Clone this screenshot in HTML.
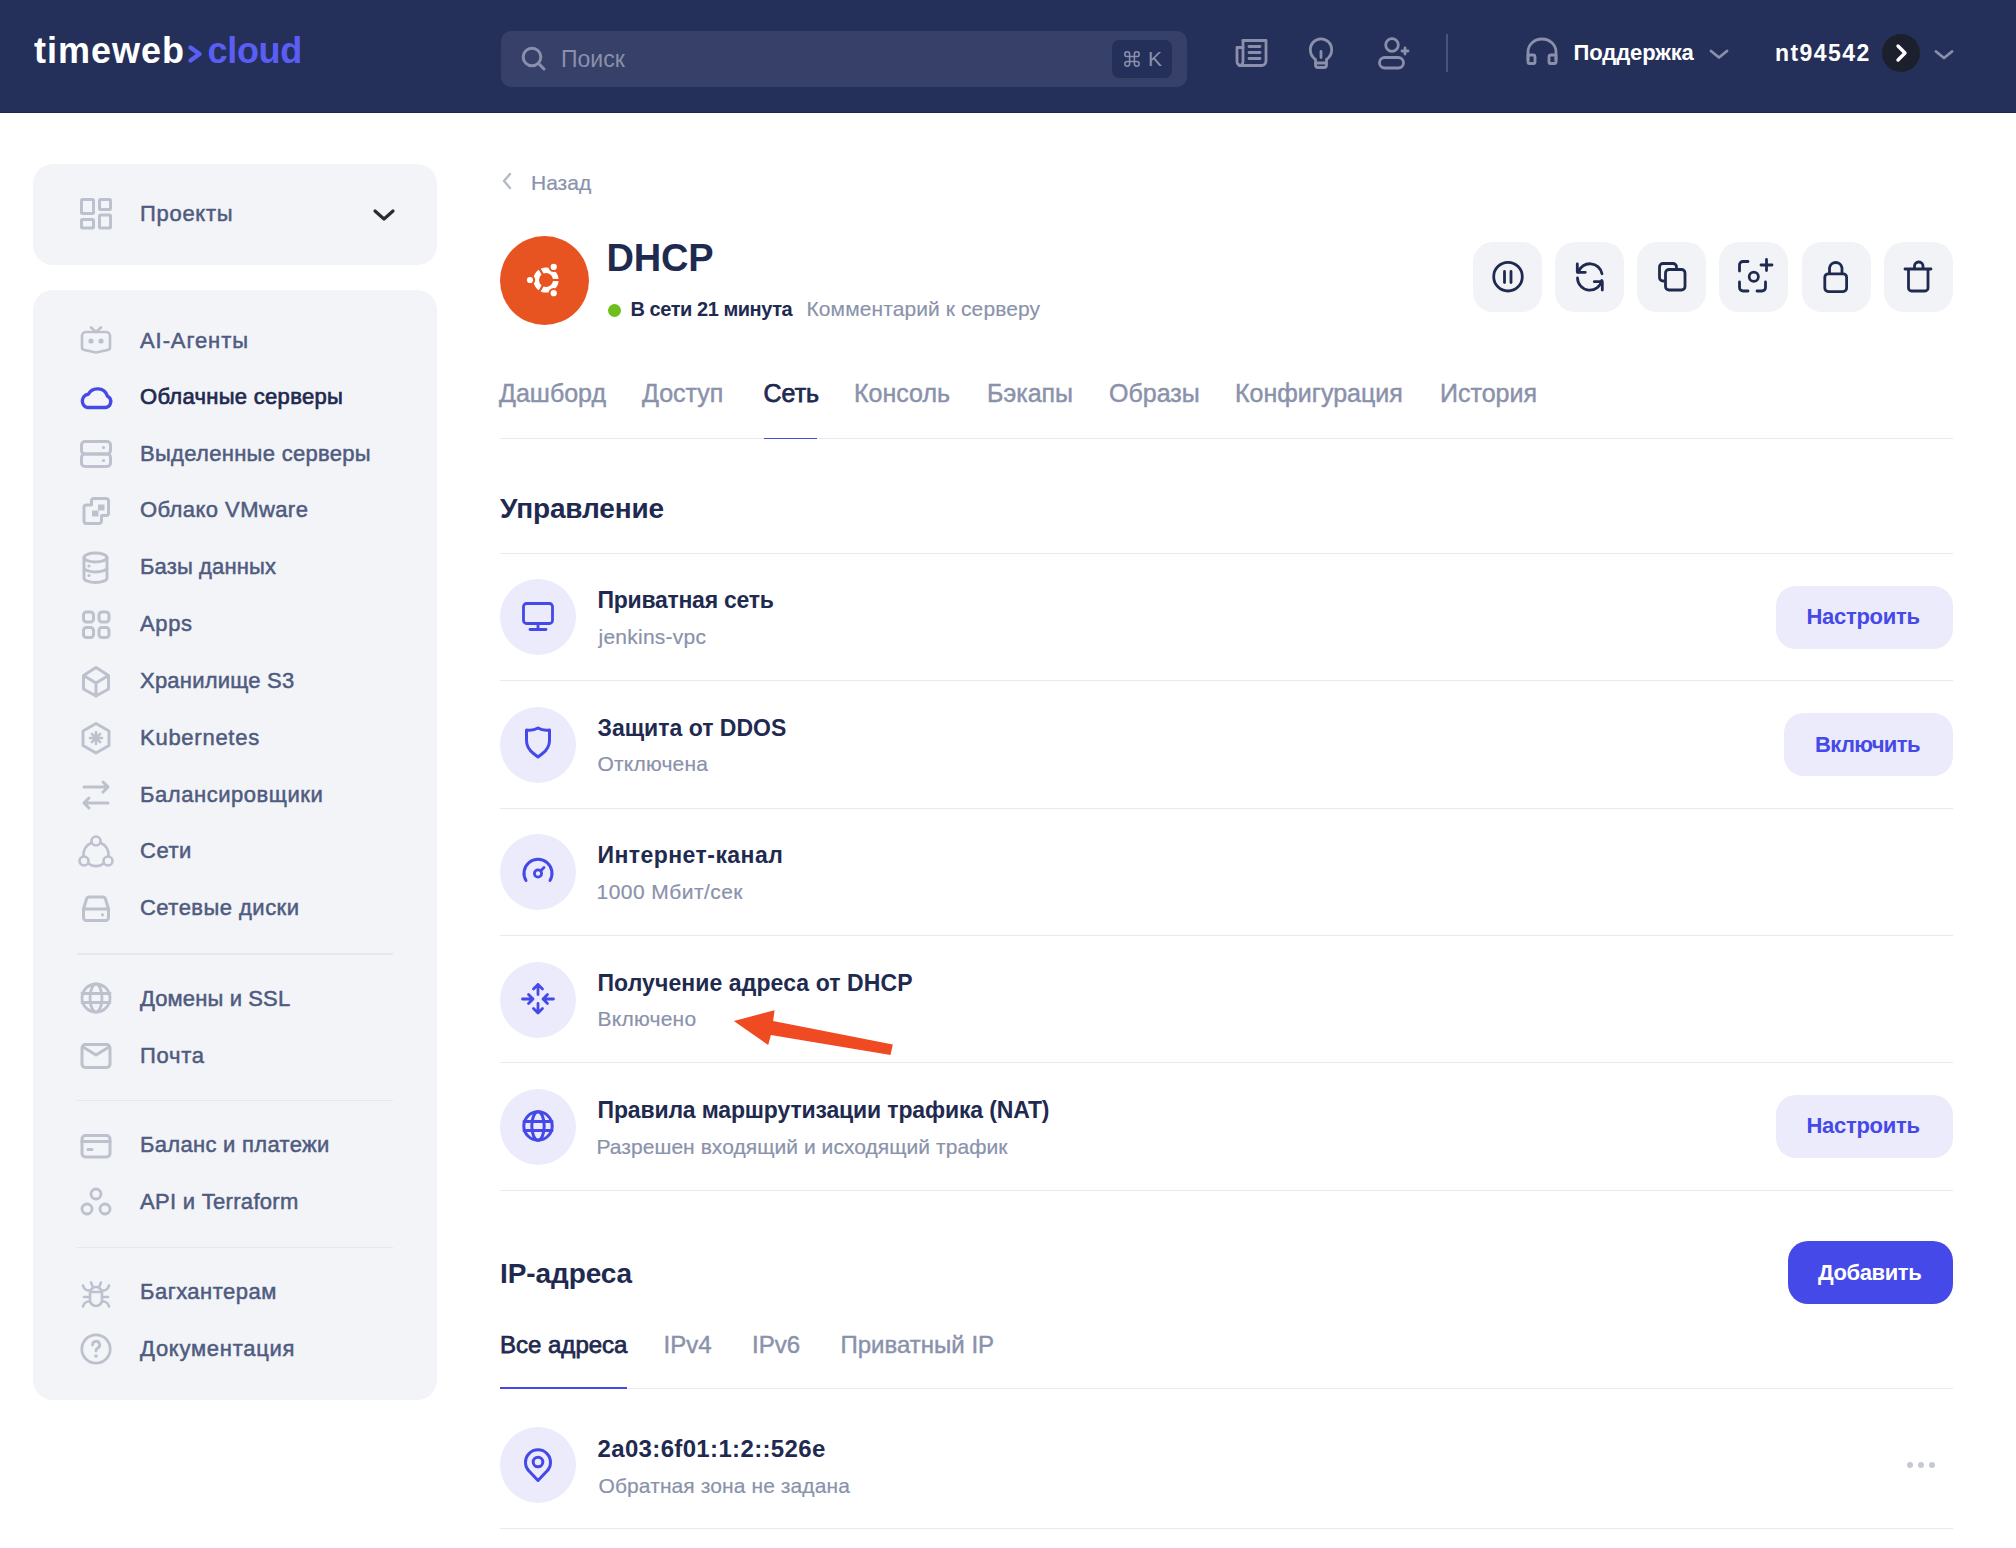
<!DOCTYPE html>
<html><head><meta charset="utf-8"><title>DHCP</title>
<style>
html,body{margin:0;padding:0;background:#fff;width:2016px;height:1548px;overflow:hidden;position:relative;font-family:"Liberation Sans",sans-serif;}
.t{position:absolute;white-space:nowrap;}
.b{position:absolute;display:block;}
</style></head><body>
<div class="b" style="left:0px;top:0px;width:2016px;height:112px;background:#25305a;border-radius:0px;"></div>
<div class="b" style="left:0px;top:112px;width:2016px;height:1px;background:#1c2550;border-radius:0px;"></div>
<div class="t" style="left:34px;top:33.2px;font-size:36px;line-height:36px;font-weight:700;color:#ffffff;letter-spacing:1px;">timeweb</div>
<svg class="b" style="left:184px;top:40px;" width="24" height="28" viewBox="0 0 24 28" fill="none" stroke-linecap="round" stroke-linejoin="round"><polyline points="6.5,7.5 15.5,14 6.5,20.5" stroke="#5a5ef5" stroke-width="4.4"/></svg>
<div class="t" style="left:207.5px;top:33.2px;font-size:36px;line-height:36px;font-weight:700;color:#5a5ef5;letter-spacing:-0.3px;">cloud</div>
<div class="b" style="left:501px;top:31px;width:686px;height:56px;background:#364069;border-radius:10px;"></div>
<svg class="b" style="left:516px;top:42px;" width="32" height="32" viewBox="0 0 32 32" fill="none" stroke-linecap="round" stroke-linejoin="round"><circle cx="16" cy="15" r="8.8" stroke="#8a90ab" stroke-width="3"/><line x1="22.5" y1="21.5" x2="28" y2="27" stroke="#8a90ab" stroke-width="3"/></svg>
<div class="t" style="left:561px;top:47.5px;font-size:23px;line-height:23px;font-weight:400;color:#8a90ab;">Поиск</div>
<div class="b" style="left:1112px;top:40px;width:60px;height:37.5px;background:#25305a;border-radius:7px;"></div>
<svg class="b" style="left:1122.2px;top:48.6px;" width="20" height="20" viewBox="0 0 20 20" fill="none" stroke-linecap="round" stroke-linejoin="round"><path d="M7.6,7.6 V5.2 A2.4,2.4 0 1 0 5.2,7.6 H14.8 A2.4,2.4 0 1 0 12.4,5.2 V14.8 A2.4,2.4 0 1 0 14.8,12.4 H5.2 A2.4,2.4 0 1 0 7.6,14.8 Z" stroke="#8a90ab" stroke-width="1.5"/></svg>
<div class="t" style="left:1148px;top:48.2px;font-size:21px;line-height:21px;font-weight:400;color:#8a90ab;">K</div>
<svg class="b" style="left:1234px;top:35.5px;" width="36" height="34" viewBox="0 0 36 34" fill="none" stroke-linecap="round" stroke-linejoin="round"><path d="M9,4.5 H32 V25 A4.5,4.5 0 0 1 27.5,29.5 H7 A4,4 0 0 1 3,25.5 V11.5 H9" stroke="#8a90ab" stroke-width="2.8"/><path d="M9,4.5 V25.5 A4,4 0 0 1 5,29.5" stroke="#8a90ab" stroke-width="2.8"/><path d="M15,10.5 H26 M15,16.5 H26 M15,22.5 H26" stroke="#8a90ab" stroke-width="2.8"/></svg>
<svg class="b" style="left:1305px;top:34px;" width="32" height="38" viewBox="0 0 32 38" fill="none" stroke-linecap="round" stroke-linejoin="round"><path d="M10.5,25.5 C7,23 5.3,19.5 5.3,15.5 A10.7,10.7 0 0 1 26.7,15.5 C26.7,19.5 25,23 21.5,25.5 V31 A2.5,2.5 0 0 1 19,33.5 H13 A2.5,2.5 0 0 1 10.5,31 Z" stroke="#8a90ab" stroke-width="2.8"/><path d="M11,29 H21 M16,17.5 V23.5" stroke="#8a90ab" stroke-width="2.8"/></svg>
<svg class="b" style="left:1376px;top:34px;" width="38" height="38" viewBox="0 0 38 38" fill="none" stroke-linecap="round" stroke-linejoin="round"><circle cx="16" cy="11" r="6.3" stroke="#8a90ab" stroke-width="2.8"/><rect x="3.5" y="23.5" width="24" height="10.5" rx="5.2" stroke="#8a90ab" stroke-width="2.8"/><path d="M29,14 V20 M26,17 H32" stroke="#8a90ab" stroke-width="2.8"/></svg>
<div class="b" style="left:1446px;top:34px;width:2px;height:38px;background:#4a5378;border-radius:0px;"></div>
<svg class="b" style="left:1524px;top:35px;" width="36" height="34" viewBox="0 0 36 34" fill="none" stroke-linecap="round" stroke-linejoin="round"><path d="M4,25 V17 A14,13 0 0 1 32,17 V25" stroke="#8a90ab" stroke-width="2.8"/><path d="M4,20 H9 A2,2 0 0 1 11,22 V27.5 A1,1 0 0 1 10,28.5 H5 A1,1 0 0 1 4,27.5 Z M32,20 H27 A2,2 0 0 0 25,22 V27.5 A1,1 0 0 0 26,28.5 H31 A1,1 0 0 0 32,27.5 Z" stroke="#8a90ab" stroke-width="2.8"/></svg>
<div class="t" style="left:1573.5px;top:42.2px;font-size:22px;line-height:22px;font-weight:700;color:#ffffff;letter-spacing:-0.1px;">Поддержка</div>
<svg class="b" style="left:1706px;top:46px;" width="26" height="16" viewBox="0 0 26 16" fill="none" stroke-linecap="round" stroke-linejoin="round"><polyline points="5,5 13,11.5 21,5" stroke="#8a90ab" stroke-width="2.8"/></svg>
<div class="t" style="left:1775px;top:41.7px;font-size:23px;line-height:23px;font-weight:700;color:#ffffff;letter-spacing:1.45px;">nt94542</div>
<div class="b" style="left:1882px;top:34px;width:38px;height:38px;border-radius:50%;background:#1b202c"></div>
<svg class="b" style="left:1892px;top:40px;" width="20" height="26" viewBox="0 0 20 26" fill="none" stroke-linecap="round" stroke-linejoin="round"><polyline points="6,6 13,13 6,20" stroke="#fff" stroke-width="3.4"/></svg>
<svg class="b" style="left:1931px;top:46px;" width="26" height="16" viewBox="0 0 26 16" fill="none" stroke-linecap="round" stroke-linejoin="round"><polyline points="5,5.5 13,12 21,5.5" stroke="#8a90ab" stroke-width="2.8"/></svg>
<div class="b" style="left:33px;top:164px;width:404px;height:101px;background:#f3f4f7;border-radius:20px;"></div>
<svg class="b" style="left:78px;top:196px;" width="36" height="36" viewBox="0 0 36 36" fill="none" stroke-linecap="round" stroke-linejoin="round"><rect x="3.5" y="3.5" width="12" height="14" rx="1" stroke="#bcc1cd" stroke-width="3"/><rect x="21.5" y="3.5" width="11" height="10" rx="1" stroke="#bcc1cd" stroke-width="3"/><rect x="3.5" y="23.5" width="12" height="8.5" rx="1" stroke="#bcc1cd" stroke-width="3"/><rect x="21.5" y="19" width="11" height="13" rx="1" stroke="#bcc1cd" stroke-width="3"/></svg>
<div class="t" style="left:140px;top:203.3px;font-size:22px;line-height:22px;font-weight:400;color:#4f5b80;letter-spacing:0.7px;-webkit-text-stroke:0.5px #4f5b80;">Проекты</div>
<svg class="b" style="left:371px;top:206px;" width="26" height="18" viewBox="0 0 26 18" fill="none" stroke-linecap="round" stroke-linejoin="round"><polyline points="4,5 13,13 22,5" stroke="#2a2b33" stroke-width="3.2"/></svg>
<div class="b" style="left:33px;top:290px;width:404px;height:1110px;background:#f3f4f7;border-radius:20px;"></div>
<div class="t" style="left:140px;top:329.6px;font-size:22px;line-height:22px;font-weight:400;color:#4f5b80;letter-spacing:0.92px;-webkit-text-stroke:0.5px #4f5b80;">AI-Агенты</div>
<div class="t" style="left:140px;top:385.8px;font-size:22px;line-height:22px;font-weight:400;color:#1f2a50;letter-spacing:0.30px;-webkit-text-stroke:0.7px #1f2a50;">Облачные серверы</div>
<div class="t" style="left:140px;top:443.0px;font-size:22px;line-height:22px;font-weight:400;color:#4f5b80;letter-spacing:0.30px;-webkit-text-stroke:0.5px #4f5b80;">Выделенные серверы</div>
<div class="t" style="left:140px;top:498.9px;font-size:22px;line-height:22px;font-weight:400;color:#4f5b80;letter-spacing:0.43px;-webkit-text-stroke:0.5px #4f5b80;">Облако VMware</div>
<div class="t" style="left:140px;top:556.3px;font-size:22px;line-height:22px;font-weight:400;color:#4f5b80;letter-spacing:0.13px;-webkit-text-stroke:0.5px #4f5b80;">Базы данных</div>
<div class="t" style="left:140px;top:612.9px;font-size:22px;line-height:22px;font-weight:400;color:#4f5b80;letter-spacing:0.63px;-webkit-text-stroke:0.5px #4f5b80;">Apps</div>
<div class="t" style="left:140px;top:669.9px;font-size:22px;line-height:22px;font-weight:400;color:#4f5b80;letter-spacing:0.21px;-webkit-text-stroke:0.5px #4f5b80;">Хранилище S3</div>
<div class="t" style="left:140px;top:726.7px;font-size:22px;line-height:22px;font-weight:400;color:#4f5b80;letter-spacing:0.74px;-webkit-text-stroke:0.5px #4f5b80;">Kubernetes</div>
<div class="t" style="left:140px;top:783.7px;font-size:22px;line-height:22px;font-weight:400;color:#4f5b80;letter-spacing:0.55px;-webkit-text-stroke:0.5px #4f5b80;">Балансировщики</div>
<div class="t" style="left:140px;top:840.3px;font-size:22px;line-height:22px;font-weight:400;color:#4f5b80;letter-spacing:0.53px;-webkit-text-stroke:0.5px #4f5b80;">Сети</div>
<div class="t" style="left:140px;top:896.7px;font-size:22px;line-height:22px;font-weight:400;color:#4f5b80;letter-spacing:0.47px;-webkit-text-stroke:0.5px #4f5b80;">Сетевые диски</div>
<div class="t" style="left:140px;top:988.3px;font-size:22px;line-height:22px;font-weight:400;color:#4f5b80;letter-spacing:0.12px;-webkit-text-stroke:0.5px #4f5b80;">Домены и SSL</div>
<div class="t" style="left:140px;top:1044.8px;font-size:22px;line-height:22px;font-weight:400;color:#4f5b80;letter-spacing:0.70px;-webkit-text-stroke:0.5px #4f5b80;">Почта</div>
<div class="t" style="left:140px;top:1134.3px;font-size:22px;line-height:22px;font-weight:400;color:#4f5b80;letter-spacing:0.30px;-webkit-text-stroke:0.5px #4f5b80;">Баланс и платежи</div>
<div class="t" style="left:140px;top:1191.3px;font-size:22px;line-height:22px;font-weight:400;color:#4f5b80;letter-spacing:0.30px;-webkit-text-stroke:0.5px #4f5b80;">API и Terraform</div>
<div class="t" style="left:140px;top:1281.3px;font-size:22px;line-height:22px;font-weight:400;color:#4f5b80;letter-spacing:0.48px;-webkit-text-stroke:0.5px #4f5b80;">Багхантерам</div>
<div class="t" style="left:140px;top:1338.3px;font-size:22px;line-height:22px;font-weight:400;color:#4f5b80;letter-spacing:0.74px;-webkit-text-stroke:0.5px #4f5b80;">Документация</div>
<div class="b" style="left:77px;top:953px;width:316px;height:2px;background:#e4e7ec;border-radius:0px;"></div>
<div class="b" style="left:77px;top:1100px;width:316px;height:1px;background:#e4e7ec;border-radius:0px;"></div>
<div class="b" style="left:77px;top:1247px;width:316px;height:1px;background:#e4e7ec;border-radius:0px;"></div>
<svg class="b" style="left:78px;top:324px;" width="36" height="36" viewBox="0 0 36 36" fill="none" stroke-linecap="round" stroke-linejoin="round"><path d="M4,12 A4,4 0 0 1 8,8 H28 A4,4 0 0 1 32,12 V23 A3,3 0 0 1 29.5,26 L18,28.5 L6.5,26 A3,3 0 0 1 4,23 Z" stroke="#bcc1cd" stroke-width="2.6"/><path d="M13,3.5 L18,8 L23,3.5" stroke="#bcc1cd" stroke-width="2.6"/><circle cx="13" cy="17" r="2.6" fill="#bcc1cd"/><circle cx="23" cy="17" r="2.6" fill="#bcc1cd"/></svg>
<svg class="b" style="left:78px;top:379px;" width="36" height="36" viewBox="0 0 36 36" fill="none" stroke-linecap="round" stroke-linejoin="round"><path d="M9,28.5 H27 A6,6 0 0 0 29.5,17.2 A10.5,10.5 0 0 0 10.3,15.3 A6.8,6.8 0 0 0 9,28.5 Z" stroke="#4549e8" stroke-width="3.4"/></svg>
<svg class="b" style="left:78px;top:436px;" width="36" height="36" viewBox="0 0 36 36" fill="none" stroke-linecap="round" stroke-linejoin="round"><rect x="3.5" y="5.5" width="29" height="12.5" rx="3.5" stroke="#bcc1cd" stroke-width="3"/><rect x="3.5" y="18" width="29" height="12.5" rx="3.5" stroke="#bcc1cd" stroke-width="3"/><circle cx="25.5" cy="11.5" r="1.6" fill="#bcc1cd"/><circle cx="25.5" cy="24.5" r="1.6" fill="#bcc1cd"/></svg>
<svg class="b" style="left:78px;top:493px;" width="36" height="36" viewBox="0 0 36 36" fill="none" stroke-linecap="round" stroke-linejoin="round"><path d="M6,14.5 A2.5,2.5 0 0 1 8.5,12 H13.5 V8 A2.5,2.5 0 0 1 16,5.5 H28 A2.5,2.5 0 0 1 30.5,8 V20 A2.5,2.5 0 0 1 28,22.5 H23.5 V28 A2.5,2.5 0 0 1 21,30.5 H8.5 A2.5,2.5 0 0 1 6,28 Z" stroke="#bcc1cd" stroke-width="3"/><rect x="20" y="11.5" width="6.5" height="6" fill="#bcc1cd"/><rect x="14" y="17.5" width="6.5" height="6" fill="#bcc1cd"/></svg>
<svg class="b" style="left:78px;top:550px;" width="36" height="36" viewBox="0 0 36 36" fill="none" stroke-linecap="round" stroke-linejoin="round"><ellipse cx="17.5" cy="7.5" rx="11.5" ry="4.5" stroke="#bcc1cd" stroke-width="3"/><path d="M6,7.5 V28 C6,30.5 11,32.5 17.5,32.5 C24,32.5 29,30.5 29,28 V7.5 M6,17.5 C6,20 11,22 17.5,22 C24,22 29,20 29,17.5" stroke="#bcc1cd" stroke-width="3"/><circle cx="11" cy="16" r="1.6" fill="#bcc1cd"/><circle cx="11" cy="25.5" r="1.6" fill="#bcc1cd"/></svg>
<svg class="b" style="left:78px;top:607px;" width="36" height="36" viewBox="0 0 36 36" fill="none" stroke-linecap="round" stroke-linejoin="round"><rect x="5.5" y="5" width="10" height="10" rx="3" stroke="#bcc1cd" stroke-width="3"/><rect x="21" y="5" width="10" height="10" rx="3" stroke="#bcc1cd" stroke-width="3"/><rect x="5.5" y="20.5" width="10" height="10" rx="3" stroke="#bcc1cd" stroke-width="3"/><rect x="21" y="20.5" width="10" height="10" rx="3" stroke="#bcc1cd" stroke-width="3"/></svg>
<svg class="b" style="left:78px;top:663px;" width="36" height="36" viewBox="0 0 36 36" fill="none" stroke-linecap="round" stroke-linejoin="round"><path d="M18,4.5 L30.5,12.5 V26 L18,33 L5.5,26 V12.5 Z M5.5,12.5 L18,20 L30.5,12.5 M18,20 V33" stroke="#bcc1cd" stroke-width="3"/></svg>
<svg class="b" style="left:78px;top:720px;" width="36" height="36" viewBox="0 0 36 36" fill="none" stroke-linecap="round" stroke-linejoin="round"><path d="M18,3.5 L31,11 V25.5 L18,33 L5,25.5 V11 Z" stroke="#bcc1cd" stroke-width="3"/><path d="M18,12 V24 M12,18 H24 M13.8,13.8 L22.2,22.2 M22.2,13.8 L13.8,22.2" stroke="#bcc1cd" stroke-width="2.6"/><circle cx="18" cy="18" r="3.5" fill="#bcc1cd"/></svg>
<svg class="b" style="left:78px;top:777px;" width="36" height="36" viewBox="0 0 36 36" fill="none" stroke-linecap="round" stroke-linejoin="round"><path d="M6,10 H30 M25,5 L30,10 L25,15 M30,26 H6 M11,21 L6,26 L11,31" stroke="#bcc1cd" stroke-width="3"/></svg>
<svg class="b" style="left:78px;top:834px;" width="36" height="36" viewBox="0 0 36 36" fill="none" stroke-linecap="round" stroke-linejoin="round"><circle cx="18" cy="7" r="4.5" stroke="#bcc1cd" stroke-width="2.6"/><circle cx="6" cy="27" r="4.5" stroke="#bcc1cd" stroke-width="2.6"/><circle cx="30" cy="27" r="4.5" stroke="#bcc1cd" stroke-width="2.6"/><path d="M13.7,8.8 A12.5,12.5 0 0 0 5.5,22.5 M22.3,8.8 A12.5,12.5 0 0 1 30.5,22.5 M10.3,29.5 A12.5,12.5 0 0 0 25.7,29.5" stroke="#bcc1cd" stroke-width="2.6"/></svg>
<svg class="b" style="left:78px;top:891px;" width="36" height="36" viewBox="0 0 36 36" fill="none" stroke-linecap="round" stroke-linejoin="round"><path d="M5.5,18 L8.5,8 A3,3 0 0 1 11.3,6 H24.7 A3,3 0 0 1 27.5,8 L30.5,18 V26.5 A3,3 0 0 1 27.5,29.5 H8.5 A3,3 0 0 1 5.5,26.5 Z M5.5,18 H30.5" stroke="#bcc1cd" stroke-width="3"/><circle cx="24.5" cy="23.8" r="1.6" fill="#bcc1cd"/></svg>
<svg class="b" style="left:78px;top:981px;" width="36" height="36" viewBox="0 0 36 36" fill="none" stroke-linecap="round" stroke-linejoin="round"><circle cx="18" cy="17" r="14" stroke="#bcc1cd" stroke-width="2.8"/><ellipse cx="18" cy="17" rx="6" ry="14" stroke="#bcc1cd" stroke-width="2.8"/><path d="M4,12.5 H32 M4,21.5 H32" stroke="#bcc1cd" stroke-width="2.8"/></svg>
<svg class="b" style="left:78px;top:1037px;" width="36" height="36" viewBox="0 0 36 36" fill="none" stroke-linecap="round" stroke-linejoin="round"><rect x="4" y="7.5" width="28" height="23" rx="3.5" stroke="#bcc1cd" stroke-width="3"/><path d="M5,10 L18,18 L31,10" stroke="#bcc1cd" stroke-width="3"/></svg>
<svg class="b" style="left:78px;top:1128px;" width="36" height="36" viewBox="0 0 36 36" fill="none" stroke-linecap="round" stroke-linejoin="round"><rect x="4" y="7.5" width="28" height="21.5" rx="3.5" stroke="#bcc1cd" stroke-width="3"/><path d="M4,13.5 H32 M10,21.5 H14" stroke="#bcc1cd" stroke-width="3"/></svg>
<svg class="b" style="left:78px;top:1185px;" width="36" height="36" viewBox="0 0 36 36" fill="none" stroke-linecap="round" stroke-linejoin="round"><circle cx="18" cy="9" r="5" stroke="#bcc1cd" stroke-width="2.8"/><circle cx="9" cy="24" r="5" stroke="#bcc1cd" stroke-width="2.8"/><circle cx="27" cy="24" r="5" stroke="#bcc1cd" stroke-width="2.8"/></svg>
<svg class="b" style="left:78px;top:1276px;" width="36" height="36" viewBox="0 0 36 36" fill="none" stroke-linecap="round" stroke-linejoin="round"><path d="M12,17 A6,6 0 0 1 24,17 V24 A6,6 0 0 1 12,24 Z M12,16 H24" stroke="#bcc1cd" stroke-width="2.6"/><path d="M13,6.5 L14.5,10 M23,6.5 L21.5,10 M5,9.5 A6,6 0 0 0 11,14.5 M31,9.5 A6,6 0 0 1 25,14.5 M6,21 H12 M24,21 H30 M5,30.5 A6,6 0 0 1 11,25.5 M31,30.5 A6,6 0 0 0 25,25.5" stroke="#bcc1cd" stroke-width="2.6"/></svg>
<svg class="b" style="left:78px;top:1331px;" width="36" height="36" viewBox="0 0 36 36" fill="none" stroke-linecap="round" stroke-linejoin="round"><circle cx="18" cy="18" r="14.2" stroke="#bcc1cd" stroke-width="2.8"/><path d="M14.5,14 A3.6,3.6 0 1 1 19.5,17.2 C18.5,17.8 18,18.5 18,19.5 V20" stroke="#bcc1cd" stroke-width="2.8"/><circle cx="18" cy="25" r="1.8" fill="#bcc1cd"/></svg>
<svg class="b" style="left:498px;top:170px;" width="18" height="22" viewBox="0 0 18 22" fill="none" stroke-linecap="round" stroke-linejoin="round"><polyline points="12,4 6,11 12,18" stroke="#b4b9c7" stroke-width="2.4"/></svg>
<div class="t" style="left:531px;top:171.6px;font-size:21px;line-height:21px;font-weight:400;color:#8a92ab;-webkit-text-stroke:0.2px #8a92ab;">Назад</div>
<div class="b" style="left:500px;top:236px;width:89px;height:89px;border-radius:50%;background:#e85421"></div>
<svg class="b" style="left:500px;top:236px" width="89" height="89" viewBox="0 0 89 89"><g transform="translate(46,44)"><circle r="9.8" fill="none" stroke="#fff" stroke-width="5.6"/><g stroke="#e85421" stroke-width="2.2"><line x1="0" y1="0" x2="14" y2="0" transform="rotate(0)"/><line x1="0" y1="0" x2="14" y2="0" transform="rotate(120)"/><line x1="0" y1="0" x2="14" y2="0" transform="rotate(240)"/></g><g fill="#e85421"><circle cx="-16" cy="0" r="5.2"/><circle cx="7.7" cy="-13.1" r="5.2"/><circle cx="7.7" cy="13.2" r="5.2"/></g><g fill="#fff"><circle cx="-16" cy="0" r="3.1"/><circle cx="7.7" cy="-13.1" r="3.1"/><circle cx="7.7" cy="13.2" r="3.1"/></g></g></svg>
<div class="t" style="left:606.5px;top:239.2px;font-size:38px;line-height:38px;font-weight:700;color:#1f2a50;letter-spacing:-0.2px;">DHCP</div>
<div class="b" style="left:607.5px;top:303.5px;width:13px;height:13px;border-radius:50%;background:#6cbf1c"></div>
<div class="t" style="left:630.5px;top:299.0px;font-size:20px;line-height:20px;font-weight:700;color:#1f2a50;letter-spacing:-0.45px;">В сети 21 минута</div>
<div class="t" style="left:806.5px;top:298.1px;font-size:21px;line-height:21px;font-weight:400;color:#8a92ab;letter-spacing:0.1px;-webkit-text-stroke:0.15px #8a92ab;">Комментарий к серверу</div>
<div class="b" style="left:1473px;top:242px;width:69px;height:70px;background:#f2f3f6;border-radius:20px;"></div>
<div class="b" style="left:1555px;top:242px;width:69px;height:70px;background:#f2f3f6;border-radius:20px;"></div>
<div class="b" style="left:1637px;top:242px;width:69px;height:70px;background:#f2f3f6;border-radius:20px;"></div>
<div class="b" style="left:1719px;top:242px;width:69px;height:70px;background:#f2f3f6;border-radius:20px;"></div>
<div class="b" style="left:1801.5px;top:242px;width:69px;height:70px;background:#f2f3f6;border-radius:20px;"></div>
<div class="b" style="left:1884px;top:242px;width:69px;height:70px;background:#f2f3f6;border-radius:20px;"></div>
<svg class="b" style="left:1490px;top:259px;" width="36" height="36" viewBox="0 0 36 36" fill="none" stroke-linecap="round" stroke-linejoin="round"><circle cx="18" cy="17.7" r="14.3" stroke="#1f2a50" stroke-width="2.8"/><path d="M14.5,12.5 V23.5 M21,12.5 V23.5" stroke="#1f2a50" stroke-width="2.8"/></svg>
<svg class="b" style="left:1572px;top:259px;" width="36" height="36" viewBox="0 0 36 36" fill="none" stroke-linecap="round" stroke-linejoin="round"><path d="M5.5,19 A12.3,12.3 0 0 0 29.8,21.5 M30,14.8 A12.3,12.3 0 0 0 6.3,13" stroke="#1f2a50" stroke-width="2.8"/><path d="M5.3,5 V13.3 H13.3 M30.3,31 V22.7 H22.3" stroke="#1f2a50" stroke-width="2.8"/></svg>
<svg class="b" style="left:1654px;top:259px;" width="36" height="36" viewBox="0 0 36 36" fill="none" stroke-linecap="round" stroke-linejoin="round"><path d="M22.5,9 V8 A3.5,3.5 0 0 0 19,4.5 H9 A3.5,3.5 0 0 0 5.5,8 V18.5 A3.5,3.5 0 0 0 9,22 H10" stroke="#1f2a50" stroke-width="2.8"/><rect x="11.5" y="10.5" width="19.5" height="20.5" rx="3.5" stroke="#1f2a50" stroke-width="2.8"/></svg>
<svg class="b" style="left:1736px;top:256px;" width="40" height="40" viewBox="0 0 40 40" fill="none" stroke-linecap="round" stroke-linejoin="round"><path d="M3.5,15 V9 A3.5,3.5 0 0 1 7,5.5 H12 M3.5,26 V31.5 A3.5,3.5 0 0 0 7,35 H12 M29.5,26 V31.5 A3.5,3.5 0 0 1 26,35 H21 M30.5,3.5 V14.5 M25,9 H36" stroke="#1f2a50" stroke-width="2.8"/><circle cx="17.8" cy="20.7" r="4.6" stroke="#1f2a50" stroke-width="2.8"/></svg>
<svg class="b" style="left:1818px;top:256px;" width="36" height="40" viewBox="0 0 36 40" fill="none" stroke-linecap="round" stroke-linejoin="round"><rect x="6.8" y="17.8" width="21.8" height="17.8" rx="3.5" stroke="#1f2a50" stroke-width="2.8"/><path d="M11.5,17.5 V12 A6.3,6.3 0 0 1 24,12 V17.5" stroke="#1f2a50" stroke-width="2.8"/></svg>
<svg class="b" style="left:1900px;top:256px;" width="36" height="40" viewBox="0 0 36 40" fill="none" stroke-linecap="round" stroke-linejoin="round"><path d="M5,13 H31 M14.5,13 V10 A4,4 0 0 1 18.5,6 H19 A4,4 0 0 1 23,10 V13 M8.5,13 V32 A3,3 0 0 0 11.5,35 H25 A3,3 0 0 0 28,32 V13" stroke="#1f2a50" stroke-width="2.8"/></svg>
<div class="t" style="left:499px;top:381.2px;font-size:25px;line-height:25px;font-weight:400;color:#8a92ab;-webkit-text-stroke:0.45px #8a92ab;">Дашборд</div>
<div class="t" style="left:642px;top:381.2px;font-size:25px;line-height:25px;font-weight:400;color:#8a92ab;-webkit-text-stroke:0.45px #8a92ab;">Доступ</div>
<div class="t" style="left:763.5px;top:381.2px;font-size:25px;line-height:25px;font-weight:400;color:#1f2a50;-webkit-text-stroke:0.75px #1f2a50;">Сеть</div>
<div class="t" style="left:854px;top:381.2px;font-size:25px;line-height:25px;font-weight:400;color:#8a92ab;-webkit-text-stroke:0.45px #8a92ab;">Консоль</div>
<div class="t" style="left:987px;top:381.2px;font-size:25px;line-height:25px;font-weight:400;color:#8a92ab;-webkit-text-stroke:0.45px #8a92ab;">Бэкапы</div>
<div class="t" style="left:1109px;top:381.2px;font-size:25px;line-height:25px;font-weight:400;color:#8a92ab;-webkit-text-stroke:0.45px #8a92ab;">Образы</div>
<div class="t" style="left:1235px;top:381.2px;font-size:25px;line-height:25px;font-weight:400;color:#8a92ab;-webkit-text-stroke:0.45px #8a92ab;">Конфигурация</div>
<div class="t" style="left:1440px;top:381.2px;font-size:25px;line-height:25px;font-weight:400;color:#8a92ab;-webkit-text-stroke:0.45px #8a92ab;">История</div>
<div class="b" style="left:500px;top:438px;width:1453px;height:1px;background:#e6e9ee;border-radius:0px;"></div>
<div class="b" style="left:764px;top:437.6px;width:53px;height:1.8px;background:#4549e8;border-radius:0px;"></div>
<div class="t" style="left:500px;top:495.4px;font-size:28px;line-height:28px;font-weight:700;color:#1f2a50;letter-spacing:-0.15px;">Управление</div>
<div class="b" style="left:500px;top:553px;width:1453px;height:1px;background:#e6e9ee;border-radius:0px;"></div>
<div class="b" style="left:500px;top:680px;width:1453px;height:1px;background:#e6e9ee;border-radius:0px;"></div>
<div class="b" style="left:500px;top:808px;width:1453px;height:1px;background:#e6e9ee;border-radius:0px;"></div>
<div class="b" style="left:500px;top:935px;width:1453px;height:1px;background:#e6e9ee;border-radius:0px;"></div>
<div class="b" style="left:500px;top:1062px;width:1453px;height:1px;background:#e6e9ee;border-radius:0px;"></div>
<div class="b" style="left:500px;top:1190px;width:1453px;height:1px;background:#e6e9ee;border-radius:0px;"></div>
<div class="b" style="left:500px;top:579.0px;width:76px;height:76px;border-radius:50%;background:#ebebfb"></div>
<div class="t" style="left:597.5px;top:589.4px;font-size:23px;line-height:23px;font-weight:700;color:#1f2a50;letter-spacing:-0.27px;">Приватная сеть</div>
<div class="t" style="left:598.5px;top:625.6px;font-size:21px;line-height:21px;font-weight:400;color:#8a92ab;letter-spacing:0.25px;-webkit-text-stroke:0.2px #8a92ab;">jenkins-vpc</div>
<div class="b" style="left:500px;top:706.5px;width:76px;height:76px;border-radius:50%;background:#ebebfb"></div>
<div class="t" style="left:597.5px;top:716.9px;font-size:23px;line-height:23px;font-weight:700;color:#1f2a50;letter-spacing:0px;">Защита от DDOS</div>
<div class="t" style="left:597.5px;top:753.1px;font-size:21px;line-height:21px;font-weight:400;color:#8a92ab;letter-spacing:0.2px;-webkit-text-stroke:0.2px #8a92ab;">Отключена</div>
<div class="b" style="left:500px;top:834.0px;width:76px;height:76px;border-radius:50%;background:#ebebfb"></div>
<div class="t" style="left:597.5px;top:844.4px;font-size:23px;line-height:23px;font-weight:700;color:#1f2a50;letter-spacing:0.45px;">Интернет-канал</div>
<div class="t" style="left:596.5px;top:880.6px;font-size:21px;line-height:21px;font-weight:400;color:#8a92ab;letter-spacing:0.45px;-webkit-text-stroke:0.2px #8a92ab;">1000 Мбит/сек</div>
<div class="b" style="left:500px;top:961.5px;width:76px;height:76px;border-radius:50%;background:#ebebfb"></div>
<div class="t" style="left:597.5px;top:971.9px;font-size:23px;line-height:23px;font-weight:700;color:#1f2a50;letter-spacing:0.09px;">Получение адреса от DHCP</div>
<div class="t" style="left:597.5px;top:1008.1px;font-size:21px;line-height:21px;font-weight:400;color:#8a92ab;letter-spacing:0.25px;-webkit-text-stroke:0.2px #8a92ab;">Включено</div>
<div class="b" style="left:500px;top:1089.0px;width:76px;height:76px;border-radius:50%;background:#ebebfb"></div>
<div class="t" style="left:597.5px;top:1099.4px;font-size:23px;line-height:23px;font-weight:700;color:#1f2a50;letter-spacing:-0.15px;">Правила маршрутизации трафика (NAT)</div>
<div class="t" style="left:596.5px;top:1135.7px;font-size:21px;line-height:21px;font-weight:400;color:#8a92ab;letter-spacing:0.05px;-webkit-text-stroke:0.2px #8a92ab;">Разрешен входящий и исходящий трафик</div>
<svg class="b" style="left:520px;top:599px;" width="36" height="36" viewBox="0 0 36 36" fill="none" stroke-linecap="round" stroke-linejoin="round"><rect x="3.5" y="4.5" width="29" height="20" rx="3" stroke="#4549e8" stroke-width="2.8"/><path d="M18,24.5 V30.5 M10,30.5 H26" stroke="#4549e8" stroke-width="2.8"/></svg>
<svg class="b" style="left:520px;top:726px;" width="36" height="36" viewBox="0 0 36 36" fill="none" stroke-linecap="round" stroke-linejoin="round"><path d="M6.5,4 C10,4.5 14,4.5 18,2 C22,4.5 26,4.5 29.5,4 V14.5 C29.5,20.5 27,24 22.5,27.5 L18,31 L13.5,27.5 C9,24 6.5,20.5 6.5,14.5 Z" stroke="#4549e8" stroke-width="3"/></svg>
<svg class="b" style="left:520px;top:852px;" width="36" height="36" viewBox="0 0 36 36" fill="none" stroke-linecap="round" stroke-linejoin="round"><path d="M6,28.5 A14,14 0 1 1 30,28.5" stroke="#4549e8" stroke-width="3"/><circle cx="18" cy="21.5" r="3.6" stroke="#4549e8" stroke-width="2.8"/><path d="M20.8,18.7 L24,15.5" stroke="#4549e8" stroke-width="2.8"/></svg>
<svg class="b" style="left:520px;top:981px;" width="36" height="36" viewBox="0 0 36 36" fill="none" stroke-linecap="round" stroke-linejoin="round"><path d="M18,3.5 V13.5 M13.5,8 L18,3.5 L22.5,8 M18,22.5 V32 M13.5,27.5 L18,32 L22.5,27.5 M2.5,18 H13 M8.5,13.5 L13,18 L8.5,22.5 M33.5,18 H23 M27.5,13.5 L23,18 L27.5,22.5" stroke="#4549e8" stroke-width="2.8"/></svg>
<svg class="b" style="left:520px;top:1108px;" width="36" height="36" viewBox="0 0 36 36" fill="none" stroke-linecap="round" stroke-linejoin="round"><circle cx="18" cy="18" r="14.2" stroke="#4549e8" stroke-width="3"/><ellipse cx="18" cy="18" rx="6.2" ry="14.2" stroke="#4549e8" stroke-width="3"/><path d="M4,13.5 H32 M4,22.5 H32" stroke="#4549e8" stroke-width="3"/></svg>
<div class="b" style="left:1776px;top:586px;width:177px;height:63px;background:#ebebfb;border-radius:20px;"></div>
<div class="t" style="left:1806.5px;top:606.3px;font-size:22px;line-height:22px;font-weight:700;color:#4549e8;letter-spacing:-0.3px;">Настроить</div>
<div class="b" style="left:1784px;top:713px;width:169px;height:63px;background:#ebebfb;border-radius:20px;"></div>
<div class="t" style="left:1815px;top:733.8px;font-size:22px;line-height:22px;font-weight:700;color:#4549e8;letter-spacing:-0.6px;">Включить</div>
<div class="b" style="left:1776px;top:1095px;width:177px;height:63px;background:#ebebfb;border-radius:20px;"></div>
<div class="t" style="left:1806.5px;top:1115.3px;font-size:22px;line-height:22px;font-weight:700;color:#4549e8;letter-spacing:-0.3px;">Настроить</div>
<svg class="b" style="left:0;top:0" width="2016" height="1548"><polygon points="733.8,1021 774.6,1010.3 773.1,1021 892.8,1044.6 890.5,1054.9 770.9,1035 768.2,1045" fill="#f04a23"/></svg>
<div class="t" style="left:500px;top:1259.9px;font-size:28px;line-height:28px;font-weight:700;color:#1f2a50;letter-spacing:-0.1px;">IP-адреса</div>
<div class="b" style="left:1788px;top:1241px;width:165px;height:63px;background:#4549e8;border-radius:20px;"></div>
<div class="t" style="left:1818px;top:1261.7px;font-size:22px;line-height:22px;font-weight:700;color:#ffffff;letter-spacing:-0.4px;">Добавить</div>
<div class="t" style="left:500px;top:1333.4px;font-size:24px;line-height:24px;font-weight:400;color:#1f2a50;-webkit-text-stroke:0.75px #1f2a50;">Все адреса</div>
<div class="t" style="left:663.5px;top:1333.4px;font-size:24px;line-height:24px;font-weight:400;color:#8a92ab;-webkit-text-stroke:0.45px #8a92ab;">IPv4</div>
<div class="t" style="left:752px;top:1333.4px;font-size:24px;line-height:24px;font-weight:400;color:#8a92ab;-webkit-text-stroke:0.45px #8a92ab;">IPv6</div>
<div class="t" style="left:840.5px;top:1333.4px;font-size:24px;line-height:24px;font-weight:400;color:#8a92ab;-webkit-text-stroke:0.45px #8a92ab;">Приватный IP</div>
<div class="b" style="left:500px;top:1388px;width:1453px;height:1px;background:#e6e9ee;border-radius:0px;"></div>
<div class="b" style="left:500px;top:1386.8px;width:127px;height:2.5px;background:#4549e8;border-radius:0px;"></div>
<div class="b" style="left:500px;top:1427px;width:76px;height:76px;border-radius:50%;background:#ebebfb"></div>
<svg class="b" style="left:520px;top:1446px;" width="36" height="38" viewBox="0 0 36 38" fill="none" stroke-linecap="round" stroke-linejoin="round"><path d="M18,34.5 L9.5,25.5 A12.5,12.5 0 1 1 26.5,25.5 Z" stroke="#4549e8" stroke-width="3"/><circle cx="18" cy="16" r="4.8" stroke="#4549e8" stroke-width="3"/></svg>
<div class="t" style="left:597.5px;top:1437.1px;font-size:24px;line-height:24px;font-weight:700;color:#1f2a50;letter-spacing:0.35px;">2a03:6f01:1:2::526e</div>
<div class="t" style="left:598.5px;top:1474.5px;font-size:21px;line-height:21px;font-weight:400;color:#8a92ab;letter-spacing:0.1px;-webkit-text-stroke:0.2px #8a92ab;">Обратная зона не задана</div>
<div class="b" style="left:1906.6px;top:1461.6px;width:6.4px;height:6.4px;border-radius:50%;background:#c5c9d4"></div>
<div class="b" style="left:1917.7px;top:1461.6px;width:6.4px;height:6.4px;border-radius:50%;background:#c5c9d4"></div>
<div class="b" style="left:1928.8px;top:1461.6px;width:6.4px;height:6.4px;border-radius:50%;background:#c5c9d4"></div>
<div class="b" style="left:500px;top:1528px;width:1453px;height:1px;background:#e6e9ee;border-radius:0px;"></div>
</body></html>
